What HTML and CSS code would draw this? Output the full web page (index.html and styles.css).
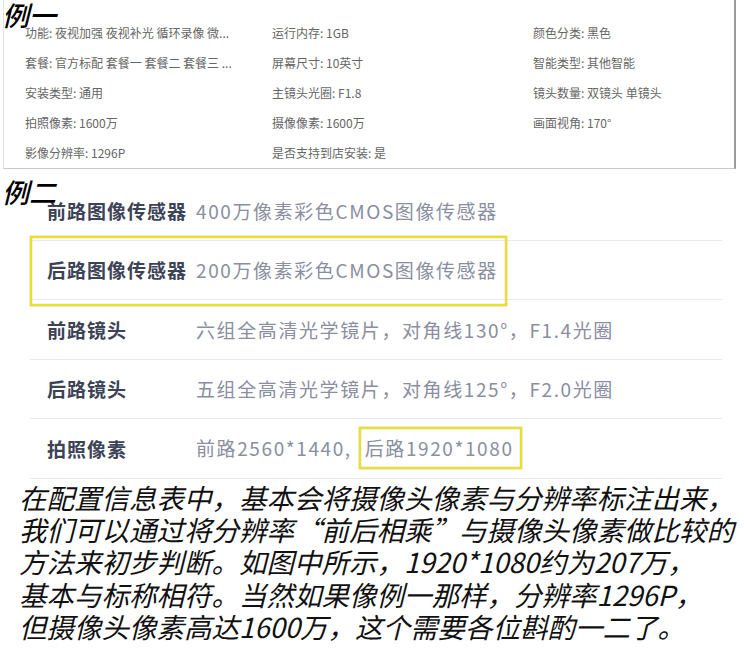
FILE: index.html
```html
<!DOCTYPE html>
<html lang="zh-CN">

<head>
  <meta charset="UTF-8">
  <title>摄像头像素与分辨率</title>
  <link rel="stylesheet" href="styles.css">
</head>

<body>
  <!-- 例一：商品参数表 -->
  <section class="ex ex1">
    <span class="tag">例一</span>
    <div class="params">
      <div>功能: 夜视加强 夜视补光 循环录像 微...</div>
      <div>运行内存: 1GB</div>
      <div>颜色分类: 黑色</div>
      <div>套餐: 官方标配 套餐一 套餐二 套餐三 ...</div>
      <div>屏幕尺寸: 10英寸</div>
      <div>智能类型: 其他智能</div>
      <div>安装类型: 通用</div>
      <div>主镜头光圈: F1.8</div>
      <div>镜头数量: 双镜头 单镜头</div>
      <div>拍照像素: 1600万</div>
      <div>摄像像素: 1600万</div>
      <div>画面视角: 170°</div>
      <div>影像分辨率: 1296P</div>
      <div>是否支持到店安装: 是</div>
    </div>
  </section>

  <!-- 例二：规格列表 -->
  <section class="ex ex2">
    <span class="tag">例二</span>
    <div class="specs">
      <div class="row">
        <span class="key">前路图像传感器</span>
        <span class="val">400万像素彩色CMOS图像传感器</span>
      </div>
      <div class="row">
        <span class="mark mark-row"></span>
        <span class="key">后路图像传感器</span>
        <span class="val">200万像素彩色CMOS图像传感器</span>
      </div>
      <div class="row">
        <span class="key">前路镜头</span>
        <span class="val">六组全高清光学镜片，对角线130°，F1.4光圈</span>
      </div>
      <div class="row">
        <span class="key">后路镜头</span>
        <span class="val">五组全高清光学镜片，对角线125°，F2.0光圈</span>
      </div>
      <div class="row">
        <span class="key">拍照像素</span>
        <span class="val">前路2560*1440,<span class="mark-inline">后路1920*1080</span></span>
      </div>
    </div>
  </section>

  <p class="note">
    在配置信息表中，基本会将摄像头像素与分辨率标注出来，<br>
    我们可以通过将分辨率“前后相乘”与摄像头像素做比较的<br>
    方法来初步判断。如图中所示，1920*1080约为207万，<br>
    基本与标称相符。当然如果像例一那样，分辨率1296P，<br>
    但摄像头像素高达1600万，这个需要各位斟酌一二了。
  </p>
</body>

</html>
```

FILE: styles.css
```css
html {
  background: #fff;
}

body {
  margin: 0;
  width: 744px;
  font-family: "Noto Sans CJK SC", "Noto Sans", sans-serif;
  color: #111;
}

.ex {
  position: relative;
}

.tag {
  position: absolute;
  left: 2px;
  z-index: 2;
  font-size: 27px;
  line-height: 1;
  font-style: italic;
  font-weight: 500;
  color: #000;
}

/* 例一 */

.ex1 .tag {
  top: 1px;
}

.params {
  margin-left: 3px;
  width: 733px;
  height: 169px;
  padding-top: 18px;
  padding-left: 21px;
  box-sizing: border-box;
  border-left: 1px solid #e2e2e2;
  border-right: 2px solid #9a9a9a;
  border-bottom: 1px solid #c8c8c8;
  display: grid;
  grid-template-columns: 247px 261px 1fr;
  grid-auto-rows: 30px;
  font-size: 12px;
  line-height: 30px;
  color: #666;
}

/* 例二 */

.ex2 .tag {
  top: -3px;
}

.specs {
  margin: 12px 22px 0 30px;
}

.row {
  position: relative;
  display: flex;
  align-items: center;
  height: 58.5px;
  border-bottom: 1px solid #e9e9ee;
  font-size: 19px;
  letter-spacing: 1px;
}

.key {
  width: 149px;
  padding-left: 17px;
  flex-shrink: 0;
  font-weight: 700;
  color: #3d4356;
}

.val {
  color: #8a8ea0;
  letter-spacing: 1.6px;
}

.mark {
  position: absolute;
  border: 2px solid #ece21c;
  box-shadow: 0 0 1px 0 #8a8440, inset 0 0 1px 0 #8a8440;
}

.mark-row {
  left: 0;
  top: -5px;
  width: 473px;
  height: 66px;
}

.mark-inline {
  display: inline-block;
  margin-left: 7px;
  padding: 0 6px 0 4px;
  line-height: 38px;
  border: 2px solid #ece21c;
  box-shadow: 0 0 1px 0 #8a8440, inset 0 0 1px 0 #8a8440;
}

/* 说明文字 */

.note {
  margin: 2px 0 0 19px;
  font-size: 27.5px;
  line-height: 32.4px;
  font-style: italic;
  color: #111;
  white-space: nowrap;
}
```
